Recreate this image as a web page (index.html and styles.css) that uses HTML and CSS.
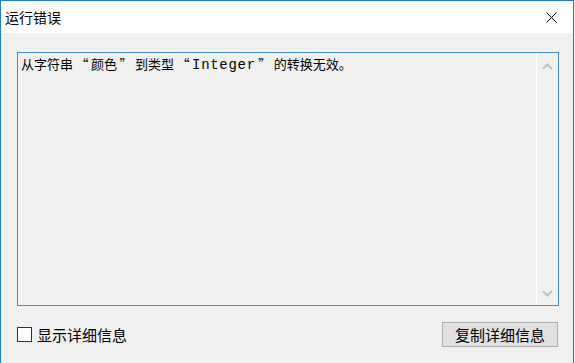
FILE: index.html
```html
<!DOCTYPE html>
<html lang="zh-CN">
<head>
    <meta charset="UTF-8">
    <title>运行错误</title>
    <link rel="stylesheet" href="styles.css">
</head>
<body>
    <div class="window">
        <!-- Title bar -->
        <div class="titlebar">
            <span class="title">运行错误</span>
            <div class="close">
                <svg width="11" height="11" viewBox="0 0 11 11">
                    <path d="M0.5 0.5 L10.5 10.5 M10.5 0.5 L0.5 10.5" stroke="#000" stroke-width="1" fill="none"/>
                </svg>
            </div>
        </div>

        <div class="content">
            <!-- Error text box -->
            <div class="textbox">
                <div class="message">从字符串<span class="quote">“</span>颜色<span class="quote">”</span>到类型<span class="quote">“</span><span class="mono">Integer</span><span class="quote">”</span>的转换无效。</div>
                <div class="scrollbar">
                    <svg width="11" height="7" viewBox="0 0 11 7">
                        <path d="M1 6 L5.5 1.5 L10 6" stroke="#c2c2c2" stroke-width="2" fill="none"/>
                    </svg>
                    <svg width="11" height="7" viewBox="0 0 11 7">
                        <path d="M1 1 L5.5 5.5 L10 1" stroke="#c2c2c2" stroke-width="2" fill="none"/>
                    </svg>
                </div>
            </div>

            <div class="footer">
                <label class="check">
                    <span class="box"></span>
                    显示详细信息
                </label>
                <button class="copy">复制详细信息</button>
            </div>
        </div>
    </div>
</body>
</html>
```

FILE: styles.css
```css
* {
    margin: 0;
    padding: 0;
    box-sizing: border-box;
}

body {
    font-family: 'Noto Sans CJK SC', sans-serif;
    background-color: #f0f0f0;
    color: #000;
}

.window {
    width: 574px;
    height: 363px;
    border: 1px solid #1a7fd4;
    border-bottom: none;
    background-color: #f0f0f0;
}

.titlebar {
    height: 32px;
    background-color: #fff;
    display: flex;
    align-items: center;
    justify-content: space-between;
    padding-left: 4px;
}

.title {
    font-size: 14px;
}

.close {
    width: 44px;
    height: 32px;
    display: flex;
    align-items: center;
    justify-content: center;
}

.content {
    padding: 19px 15px 0 16px;
}

.textbox {
    width: 542px;
    height: 254px;
    border: 1px solid #3c8fdb;
    display: flex;
}

.message {
    flex: 1;
    padding: 2px 3px;
    font-size: 13px;
    line-height: 18px;
    white-space: nowrap;
}

.quote {
    display: inline-block;
    width: 18px;
    text-align: center;
}

.mono {
    font-family: 'Liberation Mono', monospace;
    font-size: 14px;
    letter-spacing: 0.7px;
}

.scrollbar {
    width: 22px;
    border-left: 1px solid #fff;
    display: flex;
    flex-direction: column;
    justify-content: space-between;
    align-items: center;
    padding: 10px 0 8px;
}

.footer {
    margin-top: 16px;
    height: 25px;
    display: flex;
    align-items: center;
    justify-content: space-between;
}

.check {
    display: flex;
    align-items: center;
    font-size: 15px;
    gap: 5px;
}

.box {
    width: 15px;
    height: 15px;
    border: 1px solid #333;
    background-color: #fff;
}

.copy {
    width: 116px;
    height: 25px;
    background-color: #e1e1e1;
    border: 1px solid #adadad;
    font-family: 'Noto Sans CJK SC', sans-serif;
    font-size: 15px;
    color: #000;
}
```
